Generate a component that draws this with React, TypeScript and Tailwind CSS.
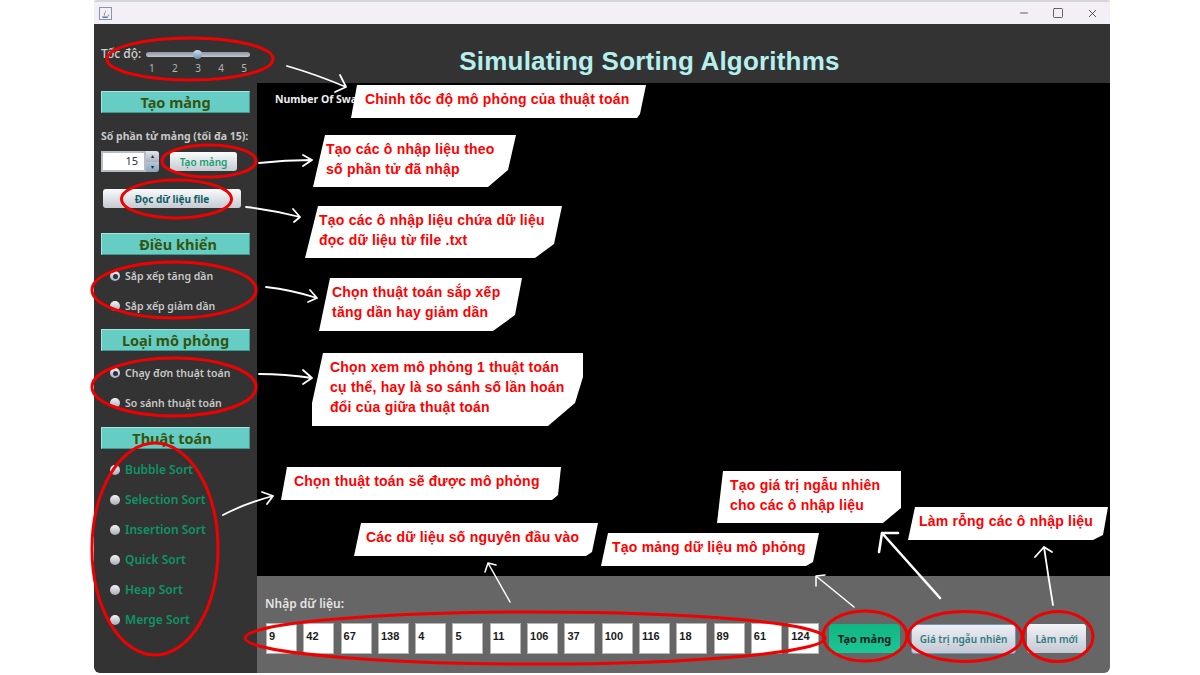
import { Minus, Square, X } from "lucide-react";

const uiFont = "font-['Noto_Sans','Liberation_Sans',sans-serif]";

// ── Annotation data ───────────────────────────────────────────────────────────

const callouts = [
  {
    box: "left-[351px] top-[85px] w-[295px] h-[33px] [clip-path:polygon(6px_0,295px_0,289px_29px,286px_33px,0_33px)]",
    text: "pl-[14px] pt-[4px]",
    lines: ["Chỉnh tốc độ mô phỏng của thuật toán"],
  },
  {
    box: "left-[313px] top-[135px] w-[203px] h-[52px] [clip-path:polygon(12px_0,203px_0,195px_35px,175px_52px,0_52px)]",
    text: "pl-[13px] pt-[4px]",
    lines: ["Tạo các ô nhập liệu theo", "số phần tử đã nhập"],
  },
  {
    box: "left-[305px] top-[206px] w-[257px] h-[52px] [clip-path:polygon(13px_0,257px_0,249px_38px,230px_52px,0_52px)]",
    text: "pl-[14px] pt-[4px]",
    lines: ["Tạo các ô nhập liệu chứa dữ liệu", "đọc dữ liệu từ file .txt"],
  },
  {
    box: "left-[319px] top-[278px] w-[203px] h-[53px] [clip-path:polygon(11px_0,203px_0,196px_37px,174px_53px,0_53px)]",
    text: "pl-[13px] pt-[4px]",
    lines: ["Chọn thuật toán sắp xếp", "tăng dần hay giảm dần"],
  },
  {
    box: "left-[312px] top-[353px] w-[271px] h-[73px] [clip-path:polygon(11px_0,271px_0,271px_24px,263px_50px,236px_73px,0_73px,0_50px)]",
    text: "pl-[18px] pt-[4px]",
    lines: ["Chọn xem mô phỏng 1 thuật toán", "cụ thể, hay là so sánh số lần hoán", "đổi của giữa thuật toán"],
  },
  {
    box: "left-[281px] top-[467px] w-[280px] h-[33px] [clip-path:polygon(6px_0,280px_0,277px_28px,271px_33px,0_33px)]",
    text: "pl-[13px] pt-[4px]",
    lines: ["Chọn thuật toán sẽ được mô phỏng"],
  },
  {
    box: "left-[354px] top-[523px] w-[244px] h-[33px] [clip-path:polygon(7px_0,244px_0,238px_29px,232px_33px,0_33px)]",
    text: "pl-[12px] pt-[4px]",
    lines: ["Các dữ liệu số nguyên đầu vào"],
  },
  {
    box: "left-[601px] top-[533px] w-[218px] h-[33px] [clip-path:polygon(7px_0,218px_0,212px_29px,205px_33px,0_33px)]",
    text: "pl-[11px] pt-[4px]",
    lines: ["Tạo mảng dữ liệu mô phỏng"],
  },
  {
    box: "left-[717px] top-[471px] w-[184px] h-[52px] [clip-path:polygon(6px_0,184px_0,184px_37px,166px_52px,0_52px)]",
    text: "pl-[13px] pt-[4px]",
    lines: ["Tạo giá trị ngẫu nhiên", "cho các ô nhập liệu"],
  },
  {
    box: "left-[908px] top-[507px] w-[200px] h-[33px] [clip-path:polygon(7px_0,200px_0,195px_28px,185px_33px,0_33px)]",
    text: "pl-[11px] pt-[4px]",
    lines: ["Làm rỗng các ô nhập liệu"],
  },
];

const ellipses = [
  [190, 59, 83, 21],
  [209, 161, 47, 16],
  [176.5, 199, 55, 19],
  [174, 290, 82, 28],
  [174, 387, 82, 29],
  [155, 549, 63, 106],
  [535, 638, 290, 26],
  [865, 636, 42, 25],
  [965, 636.5, 57, 25],
  [1058, 636.5, 35, 25],
];

const arrows = [
  { d: "M287 66 Q315 74 346 87 M340 75 L346 87 L335 92", w: 1.8 },
  { d: "M259 163 Q285 160 312 160 M303 155 L312 160 L303 166", w: 1.8 },
  { d: "M246 207 Q272 210 300 217 M293 209 L300 217 L294 222", w: 1.8 },
  { d: "M266 287 Q292 290 317 298 M310 290 L317 298 L308 302", w: 1.8 },
  { d: "M259 374 Q285 374 312 378 M303 370 L312 378 L303 384", w: 1.8 },
  { d: "M223 515 Q246 503 273 496 M262 492 L273 496 L267 504", w: 1.8 },
  { d: "M510 602 L488 563 M485 572 L488 563 L496 565", w: 1.5 },
  { d: "M854 607 L816 576 M816 586 L816 576 L825 575", w: 1.5 },
  { d: "M940 598 L882 533 M879 552 L882 533 L898 533", w: 2.6 },
  { d: "M1053 605 Q1048 575 1044 547 M1035 557 L1044 547 L1052 552", w: 1.8 },
];

const arrayValues = ["9", "42", "67", "138", "4", "5", "11", "106", "37", "100", "116", "18", "89", "61", "124"];
const sortNames = ["Bubble Sort", "Selection Sort", "Insertion Sort", "Quick Sort", "Heap Sort", "Merge Sort"];

// ── Small widgets ─────────────────────────────────────────────────────────────

function SectionHeading({ label, className }: { label: string; className: string }) {
  return (
    <div
      className={`h-[22px] w-[149px] flex items-center justify-center bg-[#66cdc4] border border-t-[#a5e5df] border-l-[#a5e5df] border-b-[#3f9a92] border-r-[#3f9a92] text-[14.5px] font-bold leading-none text-[#35540f] ${className}`}
    >
      {label}
    </div>
  );
}

function Radio({
  label,
  checked,
  className,
  labelClass,
}: {
  label: string;
  checked?: boolean;
  className: string;
  labelClass: string;
}) {
  return (
    <div className={`h-[14px] flex items-center gap-[5px] ml-[9px] ${className}`}>
      <span className="w-[10px] h-[10px] rounded-full flex items-center justify-center bg-gradient-to-b from-[#f4f4f6] to-[#a9adb8] shrink-0">
        {checked && <span className="w-[5px] h-[5px] rounded-full bg-[#27324a]" />}
      </span>
      <span className={`leading-none whitespace-nowrap ${labelClass}`}>{label}</span>
    </div>
  );
}

function SpeedSlider() {
  return (
    <>
      <div className="h-[14px] flex items-center text-[12px] font-medium leading-none text-[#d0d0d0]">
        <span className="w-[45px] whitespace-nowrap">Tốc độ:</span>
        <div className="relative w-[104px] h-[5px] rounded-full bg-gradient-to-b from-[#8d95a3] to-[#c3c8d0]">
          <span className="absolute left-[47px] top-[-2px] w-[9px] h-[9px] rounded-full bg-gradient-to-b from-[#cfe0ee] to-[#6f90ae]" />
        </div>
      </div>
      <div className="h-[14px] flex items-center justify-between pl-[48px] pr-[3px] text-[10px] leading-none text-[#b4b4b4]">
        {["1", "2", "3", "4", "5"].map(n => (
          <span key={n}>{n}</span>
        ))}
      </div>
    </>
  );
}

function Spinner() {
  return (
    <div className="w-[58px] h-[21px] flex shrink-0">
      <div className="w-[45px] flex items-center justify-end pr-[6px] bg-white border-2 border-[#b8bcc4] text-[11px] text-[#333]">
        15
      </div>
      <div className="w-[13px] flex flex-col text-[6px] leading-none text-[#1c2430]">
        <span className="flex-1 flex items-center justify-center rounded-tr-[3px] bg-gradient-to-b from-[#e2e6ec] to-[#a9b3c0]">▴</span>
        <span className="flex-1 flex items-center justify-center rounded-br-[3px] bg-gradient-to-b from-[#b3c6da] to-[#8ba3bc]">▾</span>
      </div>
    </div>
  );
}

// ── Panels ────────────────────────────────────────────────────────────────────

function Sidebar() {
  return (
    <aside className="w-[163px] shrink-0 bg-[#333333] px-[7px] pt-[23px] flex flex-col rounded-bl-[6px]">
      <SpeedSlider />
      <SectionHeading label="Tạo mảng" className="mt-[16px] pt-[1px]" />
      <div className="mt-[16px] h-[14px] flex items-center text-[10.5px] font-bold leading-none whitespace-nowrap text-[#c8c8c8]">
        Số phần tử mảng (tối đa 15):
      </div>
      <div className="mt-[8px] h-[21px] flex items-center gap-[11px]">
        <Spinner />
        <button className="w-[67px] h-[19px] rounded-[3px] bg-gradient-to-b from-[#fafbfc] to-[#c6cad2] text-[10px] font-semibold leading-none text-[#12a06e]">
          Tạo mảng
        </button>
      </div>
      <button className="mt-[17px] ml-[2px] w-[138px] h-[19px] rounded-[3px] bg-gradient-to-b from-[#fafbfc] to-[#c6cad2] text-[10px] font-bold leading-none text-[#0f5f68]">
        Đọc dữ liệu file
      </button>
      <SectionHeading label="Điều khiển" className="mt-[25px] pl-[5px]" />
      <Radio label="Sắp xếp tăng dần" checked className="mt-[14px]" labelClass="text-[10.5px] font-semibold text-[#c8c8c8]" />
      <Radio label="Sắp xếp giảm dần" className="mt-[16px]" labelClass="text-[10.5px] font-semibold text-[#c8c8c8]" />
      <SectionHeading label="Loại mô phỏng" className="mt-[16px]" />
      <Radio label="Chạy đơn thuật toán" checked className="mt-[15px]" labelClass="text-[10.5px] font-semibold text-[#c8c8c8]" />
      <Radio label="So sánh thuật toán" className="mt-[16px]" labelClass="text-[10.5px] font-semibold text-[#c8c8c8]" />
      <SectionHeading label="Thuật toán" className="mt-[17px] pr-[7px]" />
      <div className="mt-[14px] flex flex-col gap-[16px]">
        {sortNames.map(name => (
          <Radio key={name} label={name} className="" labelClass="text-[12px] font-semibold text-[#0e9565]" />
        ))}
      </div>
    </aside>
  );
}

function BottomBar() {
  return (
    <div className="h-[97px] bg-[#666666] pl-[8px] pt-[20px] rounded-br-[6px]">
      <div className="h-[16px] flex items-center text-[12px] font-semibold leading-none text-[#e4e4e4]">Nhập dữ liệu:</div>
      <div className="mt-[11px] ml-px flex items-center">
        <div className="flex gap-[6.3px]">
          {arrayValues.map((v, i) => (
            <div
              key={i}
              className="w-[31px] h-[31px] bg-white border border-[#b4b4b4] pl-[2px] pt-[1px] text-[11px] font-bold leading-[22px] text-[#1a1a1a] font-['Liberation_Sans',sans-serif]"
            >
              {v}
            </div>
          ))}
        </div>
        <button className="ml-[10px] w-[71px] h-[29px] rounded-[4px] bg-gradient-to-b from-[#0fb583] to-[#1cc795] text-[11px] font-bold leading-none text-[#10201c]">
          Tạo mảng
        </button>
        <button className="ml-[11px] w-[105px] h-[30px] rounded-[3px] border border-[#6f97bd] bg-gradient-to-b from-[#eef0f4] to-[#c3c8d2] text-[10px] font-semibold leading-none text-[#2f7a82]">
          Giá trị ngẫu nhiên
        </button>
        <button className="ml-[11px] w-[59px] h-[29px] rounded-[3px] bg-gradient-to-b from-[#f3f4f7] to-[#c3c8d2] text-[10px] font-semibold leading-none text-[#2f7a82]">
          Làm mới
        </button>
      </div>
    </div>
  );
}

function JavaIcon() {
  return (
    <svg width="13" height="13" viewBox="0 0 13 13">
      <rect x="0.5" y="0.5" width="12" height="12" fill="#eef1f6" stroke="#8a94a6" />
      <path d="M3 9.5h6l-.8 1.5H3.8z" fill="#4a78b5" />
      <path d="M5 8.5c-1-2 2-3 1-5.5 2 2-1 3.500 0 5.500z" fill="#d9622b" />
      <path d="M9 8c1-.4 1.500.800-.5 1.300" fill="none" stroke="#4a78b5" strokeWidth="0.7" />
    </svg>
  );
}

function JavaWindow() {
  return (
    <div className="ml-[94px] w-[1016px] h-[673px] flex flex-col">
      <div className="h-[2px] bg-[#d6d6d8] rounded-t-[6px]" />
      <div className="h-[22px] bg-[#f4eef6] flex items-center pl-[5px] pr-[11px] text-[#333]">
        <JavaIcon />
        <div className="ml-auto flex items-center gap-[22px]">
          <Minus className="w-[12px] h-[12px]" strokeWidth={1.5} />
          <Square className="w-[12px] h-[12px]" strokeWidth={1.5} />
          <X className="w-[13px] h-[13px]" strokeWidth={1.5} />
        </div>
      </div>
      <div className="flex-1 flex min-h-0">
        <Sidebar />
        <div className="flex-1 flex flex-col min-w-0">
          <header className="h-[59px] bg-[#333333] flex items-center justify-center pt-[15px] pr-[68px] text-[26px] font-semibold leading-none tracking-[0.2px] text-[#b6f0ee] font-['Liberation_Sans',sans-serif]">
            Simulating Sorting Algorithms
          </header>
          <main className="flex-1 bg-black pl-[18px] pt-[10px] text-[10.5px] font-bold leading-[13px] text-[#eeeeee]">
            Number Of Swaps
          </main>
          <BottomBar />
        </div>
      </div>
    </div>
  );
}

// ── Slide overlay: callouts, ellipses and arrows ──────────────────────────────

function Annotations() {
  return (
    <>
      {callouts.map(c => (
        <div key={c.lines[0]} className={`absolute bg-white ${c.box}`}>
          <div className={`text-[14px] font-bold leading-[20px] whitespace-nowrap text-[#ff0000] font-['Liberation_Sans',sans-serif] tracking-[0.22px] ${c.text}`}>
            {c.lines.map(l => (
              <div key={l}>{l}</div>
            ))}
          </div>
        </div>
      ))}
      <svg className="absolute inset-0 pointer-events-none" width="1200" height="675" fill="none">
        {ellipses.map(([cx, cy, rx, ry], i) => (
          <ellipse key={i} cx={cx} cy={cy} rx={rx} ry={ry} stroke="#f00000" strokeWidth="3" />
        ))}
        {arrows.map((a, i) => (
          <path key={i} d={a.d} stroke="#ffffff" strokeWidth={a.w} strokeLinecap="round" strokeLinejoin="round" />
        ))}
      </svg>
    </>
  );
}

export default function App() {
  return (
    <div className={`relative w-[1200px] h-[675px] overflow-hidden bg-white ${uiFont}`}>
      <JavaWindow />
      <Annotations />
    </div>
  );
}
